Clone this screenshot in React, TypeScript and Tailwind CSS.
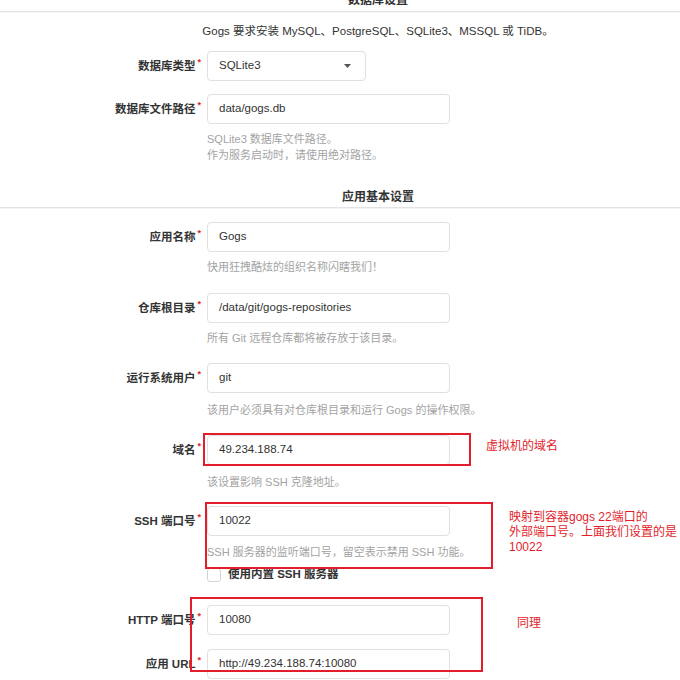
import React from "react";

const font = { fontFamily: '"Liberation Sans", "Noto Sans CJK SC", sans-serif' };

function Label({ text }: { text: string }) {
  return (
    <div className="w-[201px] shrink-0 text-right text-[11.5px] font-bold text-[#333] leading-[16px]">
      {text}
      <span className="text-[#db2828] ml-[2px] align-top text-[9px] leading-[9px]">*</span>
    </div>
  );
}

function Field({ label, value, mt, select }: { label: string; value: string; mt: string; select?: boolean }) {
  return (
    <div className={`flex items-center gap-[6px] ${mt}`}>
      <Label text={label} />
      <div
        className={`h-[30px] ${select ? "w-[159px]" : "w-[243px]"} border border-[#e0e0e0] rounded-[4px] bg-white px-[11px] flex items-center justify-between text-[11.5px] text-[#333]`}
      >
        <span>{value}</span>
        {select && (
          <svg width="7" height="4" viewBox="0 0 7 4" className="mr-[3px]">
            <path d="M0 0 L7 0 L3.5 4 Z" fill="#555" />
          </svg>
        )}
      </div>
    </div>
  );
}

function Help({ children, mt }: { children: React.ReactNode; mt: string }) {
  return <div className={`pl-[207px] text-[11px] leading-[16px] text-[#a3a3a3] ${mt}`}>{children}</div>;
}

function Divider() {
  return <div className="h-[2px] border-t border-[#e3e3e3] bg-[#f4f4f4]" />;
}

export default function App() {
  return (
    <div className="relative w-[680px] h-[680px] overflow-hidden bg-white" style={font}>
      <div className="-mt-[10px] h-[21px] leading-[21px] pl-[76px] text-center text-[12px] font-bold text-[#333]">
        数据库设置
      </div>
      <Divider />
      <div className="mt-[10px] pl-[76px] text-center text-[11.5px] leading-[16px] text-[#333]">
        Gogs 要求安装 MySQL、PostgreSQL、SQLite3、MSSQL 或 TiDB。
      </div>
      <Field label="数据库类型" value="SQLite3" mt="mt-[12px]" select />
      <Field label="数据库文件路径" value="data/gogs.db" mt="mt-[13px]" />
      <Help mt="mt-[7px]">
        <div>SQLite3 数据库文件路径。</div>
        <div>作为服务启动时，请使用绝对路径。</div>
      </Help>
      <div className="mt-[24px] h-[20px] leading-[20px] pl-[76px] text-center text-[12px] font-bold text-[#333]">
        应用基本设置
      </div>
      <Divider />
      <Field label="应用名称" value="Gogs" mt="mt-[13px]" />
      <Help mt="mt-[7px]">快用狂拽酷炫的组织名称闪瞎我们！</Help>
      <Field label="仓库根目录" value="/data/git/gogs-repositories" mt="mt-[18px]" />
      <Help mt="mt-[7px]">所有 Git 远程仓库都将被存放于该目录。</Help>
      <Field label="运行系统用户" value="git" mt="mt-[17px]" />
      <Help mt="mt-[9px]">该用户必须具有对仓库根目录和运行 Gogs 的操作权限。</Help>
      <Field label="域名" value="49.234.188.74" mt="mt-[17px]" />
      <Help mt="mt-[9px]">该设置影响 SSH 克隆地址。</Help>
      <Field label="SSH 端口号" value="10022" mt="mt-[16px]" />
      <Help mt="mt-[8px]">SSH 服务器的监听端口号，留空表示禁用 SSH 功能。</Help>
      <div className="mt-[7px] pl-[207px] flex items-center gap-[7px] h-[16px]">
        <div className="w-[14px] h-[14px] border border-[#d4d4d5] rounded-[3px] bg-white" />
        <span className="text-[11.5px] font-bold text-[#333]">使用内置 SSH 服务器</span>
      </div>
      <Field label="HTTP 端口号" value="10080" mt="mt-[22px]" />
      <Field label="应用 URL" value="http://49.234.188.74:10080" mt="mt-[14px]" />

      {/* annotations */}
      <div className="absolute left-[203px] top-[433px] w-[268px] h-[33px] border-2 border-[#e31d2b]" />
      <div className="absolute left-[205px] top-[502px] w-[288px] h-[67px] border-2 border-[#e31d2b]" />
      <div className="absolute left-[190px] top-[597px] w-[293px] h-[75px] border-2 border-[#e31d2b]" />
      <div className="absolute left-[486px] top-[438px] text-[12px] leading-[16px] text-[#e31d2b]">虚拟机的域名</div>
      <div className="absolute left-[509px] top-[510px] text-[12px] leading-[15px] text-[#e31d2b]">
        <div>映射到容器gogs 22端口的</div>
        <div>外部端口号。上面我们设置的是</div>
        <div>10022</div>
      </div>
      <div className="absolute left-[517px] top-[615px] text-[12px] leading-[16px] text-[#e31d2b]">同理</div>
    </div>
  );
}
